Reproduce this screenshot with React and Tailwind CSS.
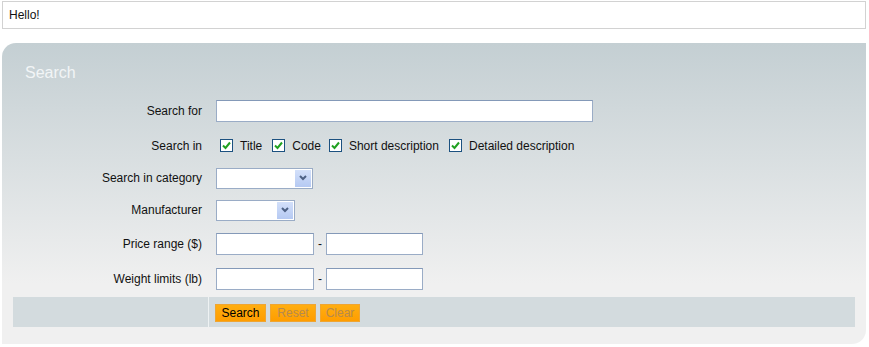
import React from 'react';

const font = { fontFamily: '"Liberation Sans", Arial, sans-serif' };

const Checkbox = () => (
  <span className="inline-flex h-[13px] w-[13px] items-center justify-center border border-[#1c5180] bg-white">
    <svg width="9" height="9" viewBox="0 0 9 9">
      <path d="M1 4.5 L3.5 7 L8 1.5" fill="none" stroke="#21a121" strokeWidth="2" />
    </svg>
  </span>
);

const TextInput = ({ className }) => (
  <div className={`h-[22px] border border-[#9aacc6] border-t-[#8499b8] bg-white ${className}`} />
);

const Select = ({ className }) => (
  <div className={`flex h-[21px] justify-end border border-[#9aacc6] bg-white p-px ${className}`}>
    <div className="flex w-[16px] items-center justify-center bg-linear-to-b from-[#d3e0fa] to-[#b5c9f2]">
      <svg width="8" height="6" viewBox="0 0 8 6">
        <path d="M1 1 L4 4 L7 1" fill="none" stroke="#4d6185" strokeWidth="2" />
      </svg>
    </div>
  </div>
);

const Row = ({ label, height, children }) => (
  <div className={`flex items-center ${height}`}>
    <div className="w-[190px] pr-[1px] text-right text-[#111]">{label}</div>
    <div className="ml-[13px] flex items-center">{children}</div>
  </div>
);

const Btn = ({ children, width, muted }) => (
  <div
    className={`flex h-[18px] ${width} items-center justify-center border border-[#efa532] bg-linear-to-b from-[#ffae10] to-[#ff9d00] ${muted ? 'text-[#b78a4c]' : 'text-black'}`}
  >
    {children}
  </div>
);

const CheckItem = ({ label, className = '' }) => (
  <div className={`flex items-center ${className}`}>
    <Checkbox />
    <span className="ml-[7px]">{label}</span>
  </div>
);

export default function App() {
  return (
    <div className="text-[12px] leading-[14px] text-[#111]" style={font}>
      <div className="ml-[2px] mt-px flex h-[28px] w-[864px] items-center border border-[#d2d2d2] bg-white pl-[6px]">
        Hello!
      </div>

      <div className="ml-[2px] mt-[14px] w-[864px] rounded-tl-[14px] rounded-br-[14px] bg-linear-to-b from-[#c4cfd3] to-[#f0f0f0] to-80% px-[11px] pb-[17px]">
        <div className="h-[50px] pl-[12px] pt-[21px] text-[16px] leading-[18px] text-[#f2f5f6]">Search</div>

        <div>
          <Row label="Search for" height="h-[35px]">
            <TextInput className="w-[377px]" />
          </Row>
          <Row label="Search in" height="h-[35px]">
            <CheckItem label="Title" className="ml-[4px]" />
            <CheckItem label="Code" className="ml-[10px]" />
            <CheckItem label="Short description" className="ml-[8px]" />
            <CheckItem label="Detailed description" className="ml-[10px]" />
          </Row>
          <Row label="Search in category" height="h-[30px]">
            <Select className="w-[97px]" />
          </Row>
          <Row label="Manufacturer" height="h-[34px]">
            <Select className="w-[79px]" />
          </Row>
          <Row label="Price range ($)" height="h-[34px]">
            <TextInput className="w-[98px]" />
            <span className="mx-[4px]">-</span>
            <TextInput className="w-[97px]" />
          </Row>
          <Row label="Weight limits (lb)" height="h-[36px]">
            <TextInput className="w-[98px]" />
            <span className="mx-[4px]">-</span>
            <TextInput className="w-[97px]" />
          </Row>
        </div>

        <div className="flex h-[30px] bg-[#d3dbde]">
          <div className="w-[196px] border-r border-[#eef2f3]" />
          <div className="flex items-center gap-[4px] pl-[6px] pt-px">
            <Btn width="w-[51px]">Search</Btn>
            <Btn width="w-[46px]" muted>Reset</Btn>
            <Btn width="w-[40px]" muted>Clear</Btn>
          </div>
        </div>
      </div>
    </div>
  );
}
